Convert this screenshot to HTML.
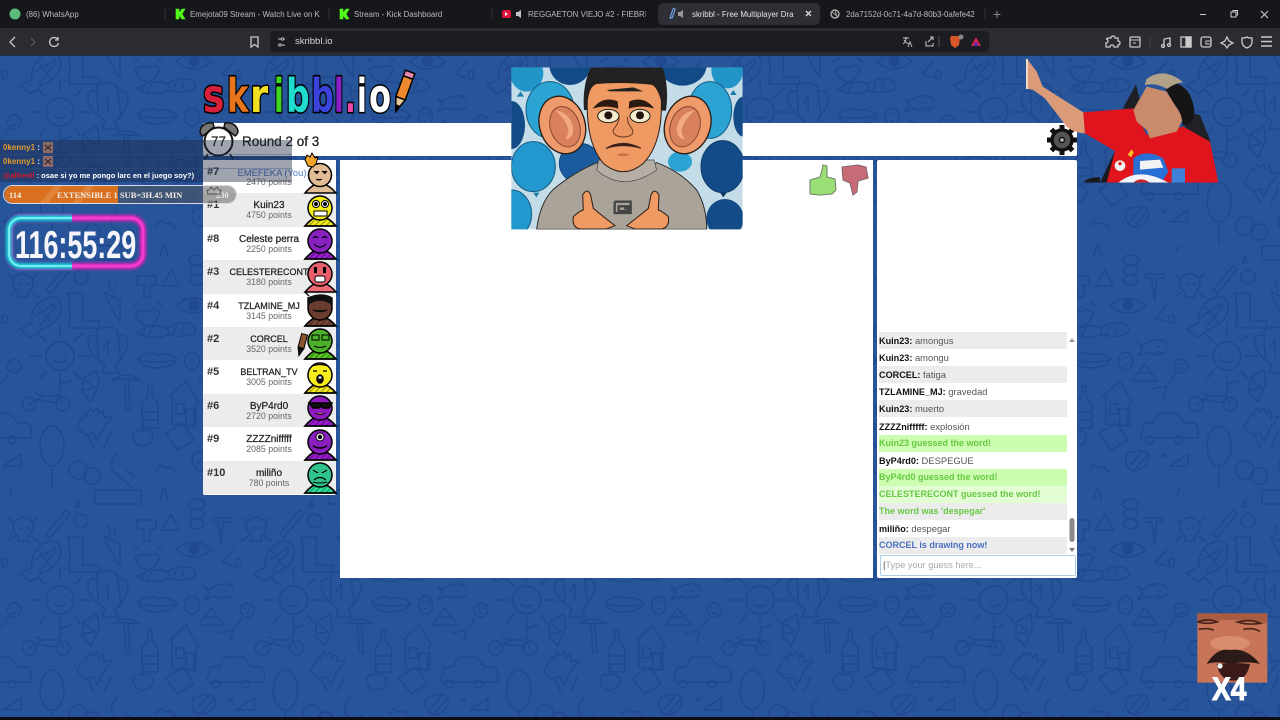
<!DOCTYPE html>
<html><head><meta charset="utf-8"><style>
html,body{margin:0;padding:0;width:1280px;height:720px;overflow:hidden;background:#28549a;font-family:"Liberation Sans",sans-serif}
.a{position:absolute}
svg.full{position:absolute;left:0;top:0}
.tab{position:absolute;top:9px;font-size:8.6px;color:#bcbcbc;white-space:nowrap;line-height:10px;transform:scaleX(.92);transform-origin:left center}
.row{position:absolute;left:203px;width:133px;height:33.4px;background:#fff;overflow:hidden}
.row.g{background:#ececec}
.rk{position:absolute;left:4px;top:6px;font-size:11px;font-weight:bold;color:#333}
.nm{position:absolute;left:0;width:132px;top:7px;text-align:center;font-size:10px;color:#222;white-space:nowrap;line-height:11px;-webkit-text-stroke:.25px #222}
.nm.u{font-size:9px}
.pt{position:absolute;left:0;width:132px;top:17px;text-align:center;font-size:8.8px;color:#666;white-space:nowrap;line-height:11px}
.c{position:absolute;left:879px;width:188px;height:17.1px;line-height:17px;font-size:9.4px;color:#555;white-space:nowrap;background:#fff}
.c.g{background:#ececec}
.c b{color:#111;font-size:9.1px}
.c.gr{color:#66c943;font-weight:bold;font-size:9px}
</style></head><body>
<svg class="full" width="1280" height="720" viewBox="0 0 1280 720">
<defs>
<pattern id="p" patternUnits="userSpaceOnUse" width="233.4" height="244">
<g fill="none" stroke="#1f4a92" stroke-width="1.7" stroke-linecap="round" stroke-linejoin="round">
<path d="M14 34q9-9 18 0q3 9-4 14v5h-10v-5q-7-5-4-14zM19 40h3M26 40h3M8 30l5 5M37 30l-5 5M8 53l6-4M38 53l-6-4"/>
<path d="M46 46l20-24l4 4l-20 24zM78 12l2 6l-5 1z"/><circle cx="81" cy="33" r="7"/>
<path d="M20 85l12-6q-2-16 12-24q16-6 17 8q-1 17-20 22q-6 8-12 8zM35 72l20-12M40 82l16-20M38 62l14 18"/>
<path d="M68 49h15v28h16v7h-30q2-18-1-35z"/>
<path d="M104 48l16 8l0 22q-10-14-16-30zM110 46l-2-10M114 47l3-8"/>
<path d="M137 32h19v9h-6v12h-6v-12h-7zM162 42l9-16l9 16z"/>
<path d="M212 30h18v4h-7l-2 22l-3-22h-6z"/>
<path d="M135 70q6-6 13-2q6-5 12 1q-5 13-12 13q-8-1-13-12zM134 62l5-4M162 62l-5-4"/>
<path d="M176 62q18-16 36 0q-18 14-36 0z"/><circle cx="194" cy="61" r="5" fill="#1f4a92"/>
<ellipse cx="197" cy="16" rx="8" ry="5"/><ellipse cx="197" cy="26" rx="7" ry="5"/><ellipse cx="197" cy="36" rx="7" ry="5"/>
<path d="M238 56l-16 18l11 4M2 78v-6q3-3 5 0v6q-3 2-5 0z"/>
<circle cx="60" cy="112" r="14"/><path d="M53 109h1M65 109h1M54 116q6 5 12 0M60 92v-12M74 97l8-7M46 97l-8-7M78 112h12M42 112h-12M74 127l6 8M46 127l-6 8M60 130v10"/>
<path d="M97 86q10-6 20 0l4 30l-6 6l4 7h-17l3-8l-7-6zM97 92q-10-4-9 8q3 12 11 16M119 92q8-4 9 8q-3 12-9 16M108 96l-5 8M108 96v16"/>
<path d="M137 89q14-10 28-6q6 4 2 8q-14 6-30-2zM167 84q12-8 24 -4q6 4 4 9q-14 6-28 1M145 86l-3 5M152 84l-4 7M176 82l-3 8M184 82l-3 8"/>
<path d="M138 114q12-8 20-3q8-4 19 4q-2 8-20 9q-16 0-19-10zM139 116q18 4 38 0"/>
<ellipse cx="192" cy="117" rx="7" ry="9"/><path d="M189 114h1M194 114h1M191 121h2"/>
<path d="M204 98l5 7l-5 7l10-4q12 6 20-2q0-12-12-10q-8 1-13 6zM225 103h1M222 108h5"/>
<path d="M211 120l-12 17h25zM205 129h13"/>
<circle cx="14" cy="122" r="7"/><circle cx="247" cy="122" r="7"/><path d="M11 120h1M16 120h1M12 125q2 1 4 0M8 130l-4 7l-6 3M241 130l-8 12l-14 3M233 142l-3 12M233 142l3 10"/>
<path d="M83 134l14-8l2 14l-8 18l-9-10zM85 136l10 8M83 146l10-2"/>
<path d="M112 136q14-10 28 0q-14-2-28 0zM124 135l2 30h4l-2-30"/>
<path d="M148 142h4v10l6 8v24h-16v-24l6-8zM142 168h16M142 176h16"/>
<path d="M169 153l17-16l13 22M172 150v30l24 2v-24M176 160h8v10h-8zM186 165h8v17h-8z"/>
<circle cx="29" cy="160" r="7"/><circle cx="63" cy="160" r="7"/><path d="M29 160l14-8h16l4 8M43 152l-8-3M59 152l2-12l10-3M38 156l20 3"/>
<path d="M77 183l8 8l8-2l4 8l7-14l8-10l-4-1l-4 2l-1-8l-4 4l-2-6l-4 4l-3-4l-3 8l-2-3z"/><path d="M88 192l6 12M104 204l7-16"/>
<path d="M207 192l4-13h8l6-10h18l8 10h10l3 5v10h-55z"/><circle cx="216" cy="196" r="4"/><circle cx="245" cy="196" r="4"/>
<path d="M-26 192l4-13h8l6-10h18l8 10h10l3 5v10h-55z"/><circle cx="-17" cy="196" r="4"/><circle cx="12" cy="196" r="4"/>
<ellipse cx="52" cy="202" rx="12" ry="20"/><path d="M52 222v22"/>
<circle cx="78" cy="226" r="9"/><circle cx="92" cy="232" r="8"/>
<path d="M117 210q-8 8-5 16q6 6 12 10q4 4 8 8M126 226l8 6"/>
<path d="M133 192q2-8 10-5q8-3 10 5q0 9-10 10q-9 0-10-10zM143 186q-1-6 2-8"/>
<path d="M165 190l18-11l11 17l-16 10z"/>
<path d="M192 216q0-9 8-8q4-3 10-1q8 3 4 12q-6 7-14 8q-8-3-8-11zM196 222l12-14M201 226l12-14"/>
<path d="M228 212l26-13v13zM3 222l18-12v12z"/>
<path d="M95 2h46v14h-46zM100 2l4-8l4 8l5-8l5 8l5-8l5 8"/>
<path d="M160 12l4-14l4 14M165 0l-5-8M12 0l-2 8M156 226l4-5l6 3l5-1l5 6"/>
</g></pattern>
<pattern id="h" patternUnits="userSpaceOnUse" width="4" height="4" patternTransform="rotate(-45)"><rect width="4" height="1.2" fill="#000" fill-opacity=".35"/></pattern>
<clipPath id="pc"><rect x="34" y="22" width="694" height="486"/></clipPath>
<clipPath id="sc"><rect x="670" y="0" width="700" height="383"/></clipPath>
<clipPath id="mm"><rect x="142" y="40" width="210" height="208"/></clipPath>
<clipPath id="tl"><rect x="0" y="205" width="72" height="70"/></clipPath>
<filter id="gl" x="-20%" y="-40%" width="140%" height="180%"><feGaussianBlur stdDeviation="1.6"/></filter>
<path id="hb" d="M1 30q6-7 11-9h8q6 2 12 9z" fill="url(#h)"/>
</defs>
<rect width="1280" height="720" fill="#28549a"/>
<rect width="1280" height="720" fill="url(#p)"/>
<rect width="1280" height="28" fill="#16171b"/>
<rect y="28" width="1280" height="27" fill="#2b2c31"/>
<rect y="55" width="1280" height="1" fill="#1b2d4f"/>
<rect x="270" y="31" width="719" height="21" rx="4" fill="#1c1d21"/>
<rect x="658" y="3" width="162" height="22" rx="5" fill="#2d2f35"/>
<rect x="0" y="717" width="1280" height="3" fill="#0b0d12"/>
<circle cx="15" cy="14" r="5.5" fill="#5dbb79"/>
<path d="M165 9v10M329 9v10M492 9v10M985 9v10" stroke="#33343a" stroke-width="1"/>
<path d="M176 9h3v4l3-4h3l-3 5l3 5h-3l-3-4v4h-3z" fill="#53fc18" stroke="#53fc18" stroke-width=".6"/>
<path d="M340 9h3v4l3-4h3l-3 5l3 5h-3l-3-4v4h-3z" fill="#53fc18" stroke="#53fc18" stroke-width=".6"/>
<rect x="502" y="10" width="9" height="8" rx="2" fill="#e0123a"/><path d="M505 12l3 2l-3 2z" fill="#fff"/>
<path d="M516 12h2l3-2v8l-3-2h-2z" fill="#c4c4c4"/>
<path d="M670 18l3-9q2-2 2 1l-3 8z" fill="none" stroke="#6e9fe0" stroke-width="1.2"/>
<path d="M678 12h2l3-2v8l-3-2h-2z" fill="#999"/>
<path d="M806 11l5 5M811 11l-5 5" stroke="#ddd" stroke-width="1.3"/>
<circle cx="835" cy="14" r="4" fill="none" stroke="#aaa" stroke-width="1.5"/><path d="M832 12l5 4M835 10l2 7" stroke="#aaa"/>
<path d="M997 11v7M993.5 14.5h7" stroke="#888"/>
<path d="M1200 14.5h6" stroke="#ccc"/>
<rect x="1231" y="12" width="5" height="5" fill="none" stroke="#ccc"/><path d="M1233 12v-1.500h4.500v4.500h-1.500" fill="none" stroke="#ccc"/>
<path d="M1261 11l7 7M1268 11l-7 7" stroke="#ccc" stroke-width="1.1"/>
<g fill="none" stroke="#c9c9c9" stroke-width="1.3">
<path d="M15 37l-5 5l5 5"/><path d="M31 38l4 4l-4 4" stroke="#555"/>
<path d="M57.5 39a4.5 4.5 0 1 0 1 4M58 37v3h-3"/>
<path d="M251 37h7v10l-3.500-2.500l-3.500 2.500z"/>
<path d="M278 39h3M284 39h1M278 45h1M281 45h4" stroke-width="1"/><circle cx="282.5" cy="39" r="1.2" stroke-width=".8"/><circle cx="280" cy="45" r="1.2" stroke-width=".8"/>
<path d="M903 38h6M906 37v1q0 4-3 6M904 40q2 3 5 4M908 47l2-5l2 5" stroke-width=".9"/>
<path d="M926 41v5h7v-3M928 42l5-5M930 37h3v3" stroke-width="1"/>
<path d="M1108 38h3q0-2 2-2t2 2h3v3q2 0 2 2t-2 2v2h-4q0-2-2-2t-2 2h-4v-4q2 0 2-2t-2-2z"/>
<rect x="1130" y="37" width="10" height="10" rx="1"/><path d="M1130 40h10M1133 43h3" stroke-width="1"/>
<path d="M1164 39l6-1v7M1164 39v8"/><circle cx="1163" cy="46" r="1.5"/><circle cx="1169" cy="45" r="1.5"/>
<rect x="1181" y="37" width="10" height="10"/><rect x="1186" y="37" width="5" height="10" fill="#c9c9c9"/>
<rect x="1201" y="37" width="10" height="10" rx="2"/><path d="M1206 41h5v3h-5z" stroke-width="1"/>
<path d="M1227 37l2 4l4 2l-4 2l-2 3l-2-3l-4-2l4-2z"/>
<path d="M1242 38q4 0 5-1q1 1 5 1v4q0 4-5 6q-5-2-5-6z"/>
<path d="M1261 37h11M1261 41.500h11M1261 46h11" stroke-width="1.4"/>
</g>
<path d="M1150 37v10" stroke="#444"/>
<path d="M939 36v11" stroke="#555"/>
<path d="M951 36h8l1 2l-1 7l-4 3l-4-3l-1-7z" fill="#d9562a"/>
<circle cx="961" cy="37" r="2.5" fill="#888"/>
<path d="M976 37l5 9h-10z" fill="#d8214a"/><path d="M976 41l2.500 5h-5z" fill="#5530a8"/>
<rect x="203" y="123" width="874" height="33" rx="2" fill="#fff"/>
<rect x="203" y="160" width="133" height="335" rx="2" fill="#fff"/>
<rect x="340" y="160" width="533" height="418" fill="#fff"/>
<rect x="877" y="160" width="200" height="418" rx="2" fill="#fff"/>
</svg>

<div class="tab" style="left:26px">(86) WhatsApp</div>
<div class="tab" style="left:190px;width:141px;overflow:hidden">Emejota09 Stream - Watch Live on Ki</div>
<div class="tab" style="left:354px">Stream - Kick Dashboard</div>
<div class="tab" style="left:528px;width:128px;overflow:hidden">REGGAETON VIEJO #2 - FIEBRE F</div>
<div class="tab" style="left:692px;color:#e4e4e4;width:114px;overflow:hidden">skribbl - Free Multiplayer Dra</div>
<div class="tab" style="left:846px;width:141px;overflow:hidden">2da7152d-0c71-4a7d-80b3-0afefe42</div>
<div class="a" style="left:295px;top:36px;font-size:9.5px;color:#d6d6d6">skribbl.io</div>

<div class="a" style="left:242px;top:134px;font-size:13.5px;color:#222;white-space:nowrap;-webkit-text-stroke:.25px #222">Round 2 of 3</div>

<div class="row" style="top:160px"><div class="rk">#7</div><div class="nm u" style="color:#4a76c9;-webkit-text-stroke:0;font-size:9.4px;left:3px">EMEFEKA (You)</div><div class="pt">2470 points</div></div>
<div class="row g" style="top:193.4px"><div class="rk">#1</div><div class="nm">Kuin23</div><div class="pt">4750 points</div></div>
<div class="row" style="top:226.8px"><div class="rk">#8</div><div class="nm">Celeste perra</div><div class="pt">2250 points</div></div>
<div class="row g" style="top:260.2px"><div class="rk">#3</div><div class="nm u">CELESTERECONT</div><div class="pt">3180 points</div></div>
<div class="row" style="top:293.6px"><div class="rk">#4</div><div class="nm u">TZLAMINE_MJ</div><div class="pt">3145 points</div></div>
<div class="row g" style="top:327px"><div class="rk">#2</div><div class="nm u">CORCEL</div><div class="pt">3520 points</div></div>
<div class="row" style="top:360.4px"><div class="rk">#5</div><div class="nm u">BELTRAN_TV</div><div class="pt">3005 points</div></div>
<div class="row g" style="top:393.8px"><div class="rk">#6</div><div class="nm">ByP4rd0</div><div class="pt">2720 points</div></div>
<div class="row" style="top:427.2px"><div class="rk">#9</div><div class="nm">ZZZZnifffff</div><div class="pt">2085 points</div></div>
<div class="row g" style="top:460.6px;height:33.4px"><div class="rk">#10</div><div class="nm">miliño</div><div class="pt">780 points</div></div>

<div class="c g" style="top:332px"><b>Kuin23:</b> amongus</div>
<div class="c" style="top:349.1px"><b>Kuin23:</b> amongu</div>
<div class="c g" style="top:366.2px"><b>CORCEL:</b> fatiga</div>
<div class="c" style="top:383.3px"><b>TZLAMINE_MJ:</b> gravedad</div>
<div class="c g" style="top:400.4px"><b>Kuin23:</b> muerto</div>
<div class="c" style="top:417.5px"><b>ZZZZnifffff:</b> explosión</div>
<div class="c gr" style="top:434.6px;background:#cdfdb0">Kuin23 guessed the word!</div>
<div class="c" style="top:451.7px"><b>ByP4rd0:</b> DESPEGUE</div>
<div class="c gr" style="top:468.8px;background:#cdfdb0">ByP4rd0 guessed the word!</div>
<div class="c gr" style="top:485.9px;background:#e3fdd3">CELESTERECONT guessed the word!</div>
<div class="c gr" style="top:503px;background:#ececec">The word was 'despegar'</div>
<div class="c" style="top:520.1px"><b>miliño:</b> despegar</div>
<div class="c g" style="top:537.2px;color:#4a6fc0;font-weight:bold;font-size:9px">CORCEL is drawing now!</div>
<div class="a" style="left:880px;top:555px;width:192px;height:19px;border:1px solid #a9cfe6;border-radius:2px;background:#fff;font-size:9.2px;color:#aaa;line-height:19px;padding-left:2px"><span style="color:#444">|</span>Type your guess here...</div>

<svg class="full" width="1280" height="720" viewBox="0 0 1280 720" font-family="Liberation Sans, sans-serif">
<path d="M1072 338l3 4h-6z" fill="#999"/><path d="M1072 552l3-4h-6z" fill="#777"/>
<rect x="1069.5" y="518" width="5" height="24" rx="2.5" fill="#8a8a8a"/>

<!-- logo -->
<g font-family="DejaVu Sans, sans-serif" font-weight="bold" font-size="46" stroke="#000" stroke-width="3.2" paint-order="stroke" stroke-linejoin="round">
<text fill="#d8203a" transform="translate(203 112) scale(.78 1)">s</text>
<text fill="#e8751c" transform="translate(227 112) scale(.7 1)">k</text>
<text fill="#f2e020" transform="translate(250 112) scale(.8 1)">r</text>
<text fill="#3ed81e" transform="translate(274 112) scale(.62 1)">i</text>
<text fill="#20dcd0" transform="translate(286 112) scale(.72 1)">b</text>
<text fill="#3a44dd" transform="translate(311 112) scale(.7 1)">b</text>
<text fill="#8a20c8" transform="translate(334 112) scale(.62 1)">l</text>
<text fill="#ee48a8" transform="translate(345 112) scale(.62 1)">.</text>
<text fill="#fff" transform="translate(357 112) scale(.62 1)">i</text>
<text fill="#fff" transform="translate(369 112) scale(.7 1)">o</text>
</g>
<g transform="translate(405 86) rotate(20)" stroke="#000" stroke-width="1.5"><rect x="-5" y="-15" width="10" height="6" fill="#e88ab0"/><rect x="-5" y="-9" width="10" height="22" fill="#ee8a2e"/><path d="M-5 13l5 14l5-14z" fill="#e8c79a"/><path d="M-2 21l2 6l2-6z" fill="#000"/></g>

<!-- clock -->
<g stroke="#111" stroke-width="1.5"><path d="M200 131q2-9 13-8l1 4l-11 9q-3-2-3-5zM238 131q-2-9-13-8l-1 4l11 9q3-2 3-5z" fill="#777"/><path d="M208 154l-3 5M230 154l3 5"/><circle cx="218.5" cy="141.5" r="14" fill="#fff" stroke-width="2"/></g>
<text x="218.5" y="146" font-size="13.5" text-anchor="middle" fill="#222" stroke="#222" stroke-width=".2">77</text>

<!-- thumbs -->
<path d="M810 180l10-3l2-7l1-5l4 1l0 11l8 2l1 11l-4 4l-12 1l-10-1z" fill="#9ade76" stroke="#6f7f66" stroke-width="1"/>
<path d="M842 167l16-2l8 2l2 11l-10 3l-1 11l-4 3l-3-12l-7-3z" fill="#c96b76" stroke="#7d6469" stroke-width="1"/>

<!-- gear -->
<g transform="translate(1062 140)"><circle r="10" fill="#555" stroke="#111" stroke-width="3.5"/><g fill="#111"><rect x="-2.5" y="-15" width="5" height="6"/><rect x="-2.5" y="9" width="5" height="6"/><rect x="-15" y="-2.5" width="6" height="5"/><rect x="9" y="-2.5" width="6" height="5"/><rect x="-2.5" y="-15" width="5" height="6" transform="rotate(45)"/><rect x="-2.5" y="-15" width="5" height="6" transform="rotate(135)"/><rect x="-2.5" y="-15" width="5" height="6" transform="rotate(225)"/><rect x="-2.5" y="-15" width="5" height="6" transform="rotate(315)"/></g><circle r="2.5" fill="#bbb" stroke="#111" stroke-width="1.5"/></g>

<!-- avatars -->
<g stroke="#000" stroke-width="1.5">
<g transform="translate(304 163)"><path d="M1 30q6-7 11-9h8q6 2 12 9z" fill="#e2bc94"/><circle cx="16" cy="12" r="11.5" fill="#e2bc94"/><path d="M10 8l3 2.500l2-2.500M18 8l3 2.500l2-2.500M12 16q3 2 6 0" fill="#000" stroke-width="1"/></g>
<path d="M305 160l2-5l3 2l2-4l3 5l3-1l-2 7l-3 3l-5-1z" fill="#f2a42a" stroke-width="1"/>
<g transform="translate(304 196)"><path d="M1 30q6-7 11-9h8q6 2 12 9z" fill="#f4ec1a"/><use href="#hb"/><circle cx="16" cy="12" r="12" fill="#f4ec1a"/><circle cx="12" cy="8" r="3.5" fill="#fff" stroke-width="1"/><circle cx="21" cy="8" r="3.500" fill="#fff" stroke-width="1"/><circle cx="12" cy="8" r="1.2"/><circle cx="21" cy="8" r="1.2"/><rect x="10" y="15" width="13" height="5" fill="#fff" stroke-width="1"/></g>
<g transform="translate(304 229)"><path d="M1 30q6-7 11-9h8q6 2 12 9z" fill="#9a1fd0"/><use href="#hb"/><circle cx="16" cy="12" r="12" fill="#8a22c0"/><path d="M9 9q3-3 5 0M18 9q3-3 5 0M10 15q6 6 12 0" fill="none" stroke-width="1.2"/></g>
<g transform="translate(304 262)"><path d="M1 30q6-7 11-9h8q6 2 12 9z" fill="#ee6a78"/><circle cx="16" cy="12" r="12" fill="#e8606c"/><rect x="10" y="5" width="3" height="6" fill="#000" stroke="none"/><rect x="19" y="5" width="3" height="6" fill="#000" stroke="none"/><rect x="11" y="14" width="10" height="6" rx="2" fill="#fff" stroke-width="1"/></g>
<g transform="translate(304 296)"><path d="M1 30q6-7 11-9h8q6 2 12 9z" fill="#7a4436"/><use href="#hb"/><circle cx="16" cy="12" r="12" fill="#6c3b30"/><path d="M4 8q12-8 24 0v-6q-10-6-24 0zM5 0l-4-4M9 14q7 3 14 0" fill="#111" stroke="#111"/></g>
<g transform="translate(304 329)"><path d="M1 30q6-7 11-9h8q6 2 12 9z" fill="#55c71e"/><use href="#hb"/><circle cx="16" cy="12" r="12" fill="#4cb02a"/><rect x="8" y="6" width="7" height="5" fill="none" stroke-width="1"/><rect x="18" y="6" width="7" height="5" fill="none" stroke-width="1"/><path d="M10 17q6 3 12 0" fill="none" stroke-width="1"/></g>
<g transform="translate(302 344) rotate(15)" stroke-width="1"><rect x="-3" y="-10" width="6" height="14" fill="#8a5530"/><path d="M-3 4l3 8l3-8z" fill="#111"/></g>
<g transform="translate(304 363)"><path d="M1 30q6-7 11-9h8q6 2 12 9z" fill="#f7ec1c"/><use href="#hb"/><circle cx="16" cy="12" r="12" fill="#f7ec1c"/><path d="M8 3q8-3 16 0M9 8h4M19 8h4" fill="none" stroke-width="1.2"/><ellipse cx="16" cy="16" rx="3" ry="4" fill="#111"/><rect x="14.5" y="13.5" width="3" height="2" fill="#fff" stroke="none"/></g>
<g transform="translate(304 396)"><path d="M1 30q6-7 11-9h8q6 2 12 9z" fill="#a019d8"/><use href="#hb"/><circle cx="16" cy="12" r="12" fill="#8f1bc0"/><path d="M5 7h23l-3 5h-6l-2-2l-2 2h-6z" fill="#111"/><path d="M11 17q5 3 10 0" fill="#d66" stroke-width="1"/></g>
<g transform="translate(304 430)"><path d="M1 30q6-7 11-9h8q6 2 12 9z" fill="#9a1cd0"/><use href="#hb"/><circle cx="16" cy="12" r="12" fill="#8a1fc0"/><circle cx="16" cy="7" r="4" fill="#fff" stroke-width="1"/><circle cx="16" cy="7" r="1.5"/><path d="M9 16q7 4 14 0" fill="none"/></g>
<g transform="translate(304 463)"><path d="M1 30q6-7 11-9h8q6 2 12 9z" fill="#2fe09a"/><use href="#hb"/><circle cx="16" cy="12" r="12" fill="#30c48c"/><path d="M9 7l5 3M23 7l-5 3M10 17q6-5 12 0M9 19q7 2 14 0" fill="none" stroke-width="1.1"/></g>
</g>

<!-- portrait -->
<g transform="translate(500 60) scale(.33333)" clip-path="url(#pc)">
<rect x="34" y="22" width="694" height="486" fill="#c3dce8"/>
<ellipse cx="80" cy="40" rx="50" ry="55" fill="#2195c8"/><path d="M50 110h22l-10-16z" fill="#1c7aa8"/>
<ellipse cx="210" cy="15" rx="62" ry="60" fill="#124b87"/>
<ellipse cx="150" cy="150" rx="72" ry="85" fill="#2ba3d3" stroke="#165b82" stroke-width="3"/>
<ellipse cx="35" cy="195" rx="40" ry="72" fill="#124b87"/>
<ellipse cx="100" cy="320" rx="66" ry="75" fill="#2298cf" stroke="#165b82" stroke-width="3"/>
<ellipse cx="35" cy="462" rx="60" ry="72" fill="#2298cf" stroke="#165b82" stroke-width="3"/>
<ellipse cx="240" cy="310" rx="62" ry="60" fill="#1a5a9f" stroke="#124b87" stroke-width="3"/>
<ellipse cx="548" cy="15" rx="72" ry="62" fill="#124b87"/>
<ellipse cx="682" cy="30" rx="48" ry="55" fill="#2195c8"/><path d="M690 105h20l-10-15z" fill="#1c7aa8"/>
<ellipse cx="630" cy="150" rx="65" ry="85" fill="#2ba3d3" stroke="#165b82" stroke-width="3"/>
<ellipse cx="730" cy="170" rx="30" ry="60" fill="#124b87"/>
<ellipse cx="668" cy="320" rx="65" ry="78" fill="#124b87" stroke="#0e3a6b" stroke-width="3"/>
<ellipse cx="540" cy="305" rx="36" ry="30" fill="#2ba3d3"/>
<ellipse cx="675" cy="475" rx="56" ry="58" fill="#124b87"/>
<path d="M100 398h18l-9 14z" fill="#1c7aa8"/><path d="M660 398h20l-10 14z" fill="#0e3a6b"/>
<ellipse cx="187" cy="195" rx="68" ry="88" fill="#ee9a6a" stroke="#2a1c16" stroke-width="4" transform="rotate(-18 187 195)"/>
<ellipse cx="195" cy="200" rx="44" ry="62" fill="#d9805c" stroke="#8a4a30" stroke-width="3" transform="rotate(-18 195 200)"/>
<path d="M165 150q50 10 55 60q-4 30-25 26q30-30-30-86z" fill="#f3aa7c"/>
<ellipse cx="563" cy="195" rx="68" ry="88" fill="#ee9a6a" stroke="#2a1c16" stroke-width="4" transform="rotate(18 563 195)"/>
<ellipse cx="555" cy="200" rx="44" ry="62" fill="#d9805c" stroke="#8a4a30" stroke-width="3" transform="rotate(18 555 200)"/>
<path d="M585 150q-50 10-55 60q4 30 25 26q-30-30 30-86z" fill="#f3aa7c"/>
<path d="M110 508q10-80 50-120q60-50 130-80q80 50 180 0q70 25 120 82q30 50 30 118z" fill="#a9a399" stroke="#2a2a2a" stroke-width="3"/>
<path d="M290 330q80 70 180 0l-8-30h-166z" fill="#b5aea4" stroke="#444" stroke-width="2"/>
<path d="M252 150q-6-70 20-128h216q20 60 10 130z" fill="#222"/>
<path d="M262 120q-4 130 48 190q60 50 120 0q58-60 54-190q-14-50-36-48q-80-8-156-2q-24 4-30 50z" fill="#ee9a62" stroke="#2a1c16" stroke-width="3"/>
<path d="M320 90l80-8l30 12l-100 0z" fill="#222"/>
<path d="M278 146q30-40 75-22l2 22q-40-12-77 0zM463 146q-30-40-75-22l-2 22q40-12 77 0z" fill="#2b1a12"/>
<ellipse cx="325" cy="168" rx="32" ry="20" fill="#f6eccd" stroke="#222" stroke-width="3"/><circle cx="325" cy="166" r="12" fill="#1d1410"/>
<ellipse cx="420" cy="168" rx="30" ry="20" fill="#f6eccd" stroke="#222" stroke-width="3"/><circle cx="420" cy="166" r="12" fill="#1d1410"/>
<path d="M358 170q-2 20-16 36q-8 14 10 22q18 6 36 0q18-8 6-24q-12-14-12-34" fill="#eb9660" stroke="#6a3a22" stroke-width="3"/>
<path d="M318 265q50-30 105 0q-50-16-105 0z" fill="#3a201a" stroke="#3a201a" stroke-width="3"/>
<ellipse cx="370" cy="284" rx="18" ry="4" fill="#c97048"/>
<path d="M344 425h48v14h-36v14h30v-8h-14M344 425v34h48v-20" fill="none" stroke="#444" stroke-width="7"/>
<path d="M220 470q20-18 30-20l-2-45q14-23 24 0l8 40q30 25 65 52l-25 10h-80q-25-5-20-37z" fill="#ee9a62" stroke="#2a1c16" stroke-width="3"/>
<path d="M505 470q-20-18-30-20l2-45q-14-23-24 0l-8 40q-30 25-65 52l25 10h80q25-5 20-37z" fill="#ee9a62" stroke="#2a1c16" stroke-width="3"/>
</g>

<!-- streamer -->
<g transform="translate(800 55) scale(.33333)" clip-path="url(#sc)">
<path d="M968 160l40-72l20 80zM1150 170l50 10l32 80l-70-10z" fill="#1f2126"/>
<path d="M900 383l45-95l40 95zM850 383q15-18 50-16v16z" fill="#191a1e"/>
<path d="M680 10l30 40l18 45l122 77l5 63q-30 0-55-20l-65-85l-35-25l-20-5z" fill="#dc9b78"/>
<rect x="678" y="12" width="6" height="90" fill="#f3d9c8"/>
<path d="M850 172l150-12l40 80l110-25l80 45l25 123h-335l25-95l-90-53z" fill="#e0141c"/>
<path d="M1040 95l-40 70l10 35l30 25l10 25l80-20l20-40l-50-80z" fill="#c98b6c"/>
<path d="M1090 90q50-20 80 30q20 50 10 70q-15 30-32 20q-4-40-20-55q-20-30-38-65z" fill="#151515"/>
<path d="M1040 72q50-38 110 10q-20 0-50 20q-30-20-66-12z" fill="#b3a28a"/>
<circle cx="960" cy="332" r="16" fill="#f3f3f3"/><circle cx="960" cy="326" r="5" fill="#e0141c"/>
<path d="M995 283l6 10l-8 14l-10-8z" fill="#f6c12a"/>
<path d="M1000 310q40-30 90 0l15 40l-20 33h-85z" fill="#2a6fd6"/>
<path d="M1020 318l60-4l10 24l-70 6z" fill="#f3f3f3"/>
<path d="M955 383q60-50 150 0z" fill="#f1f4fa"/><path d="M1000 383q20-20 50 0z" fill="#c8252a"/>
<rect x="1115" y="340" width="40" height="43" fill="#3f80d8"/>
</g>

<!-- left overlay -->
<rect x="0" y="140" width="292" height="42" fill="#1c2740" opacity=".42"/>
<rect x="0" y="154" width="292" height="1" fill="#38527f" opacity=".4"/>
<rect x="0" y="168" width="292" height="1" fill="#38527f" opacity=".4"/>
<g font-size="7.5" font-weight="bold">
<text x="3" y="150" fill="#e29a2b" font-size="8">0kenny1<tspan fill="#fff"> :</tspan></text>
<text x="3" y="164" fill="#e29a2b" font-size="8">0kenny1<tspan fill="#fff"> :</tspan></text>
<text x="3" y="178" fill="#d8162c">@alfreell<tspan fill="#fff"> : osae si yo me pongo larc en el juego soy?)</tspan></text>
</g>
<rect x="43" y="142" width="10" height="11" fill="#8a6a68"/><rect x="43" y="156" width="10" height="11" fill="#8a6a68"/>
<path d="M45 145l6 5M51 145l-6 5M45 159l6 5M51 159l-6 5" stroke="#2c1c1c"/>
<rect x="3.5" y="185.5" width="233" height="18" rx="9" fill="#555" fill-opacity=".5" stroke="#d8dce6" stroke-width="1"/>
<path d="M13 186h105v17h-105a8.500 8.500 0 0 1 0-17z" fill="#d8701f"/>
<path d="M40 203l14-17h8l-14 17zM72 203l14-17h8l-14 17z" fill="#e58a44" opacity=".7"/>
<g font-family="Liberation Serif, serif" fill="#f3ede4" font-size="8.5" font-weight="bold"><text x="9" y="198">114</text><text x="57" y="198">EXTENSIBLE 1 SUB=3H.45 MIN</text><text x="216" y="198" style="fill:#e8e8e8">230</text></g>
<path d="M207 190l2 0l2-3l3 3l3-3l2 3l2 0l-1 4h-12z M207 194h14" fill="none" stroke="#555" stroke-width="1"/>

<!-- timer -->
<rect x="9" y="218" width="134" height="48" rx="12" fill="none" stroke="#ee1fc0" stroke-width="6" filter="url(#gl)"/>
<rect x="9" y="218" width="134" height="48" rx="12" fill="none" stroke="#f23dcc" stroke-width="3"/>
<g clip-path="url(#tl)"><rect x="7" y="219" width="140" height="46" rx="12" fill="none" stroke="#28549a" stroke-width="7"/><rect x="9" y="218" width="134" height="48" rx="12" fill="none" stroke="#24e6ea" stroke-width="5" filter="url(#gl)"/><rect x="9" y="218" width="134" height="48" rx="12" fill="none" stroke="#8ff5f5" stroke-width="1.5"/></g>
<text font-size="39" font-weight="bold" fill="#f6f6fa" transform="translate(15 258) scale(.69 1)">116:55:29</text>

<!-- meme -->
<g transform="translate(1150 600) scale(.33333)">
<rect x="142" y="40" width="210" height="208" fill="#c77458"/>
<g clip-path="url(#mm)">
<path d="M142 40h210v30q-100-20-210 0z" fill="#a85c42"/>
<path d="M142 66q30-12 60 0q-30 8-60 0zM262 66q40-10 70 4q-40 6-70-4zM146 88q30-6 45 3M280 88q30-6 50 6" stroke="#4a241a" stroke-width="5" fill="none"/>
<ellipse cx="240" cy="130" rx="60" ry="22" fill="#d98c6e"/>
<path d="M170 192q30-50 70-42q50-8 90 42q-40-10-90 0q-40-10-70 0z" fill="#2b1a16"/>
<path d="M200 192q50-6 100 0q-10 50-50 50q-40 0-50-50z" fill="#3a1a18"/>
<circle cx="210" cy="198" r="8" fill="#eee"/>
</g></g>
<text font-size="32" font-weight="bold" fill="#fff" stroke="#fff" stroke-width="1" transform="translate(1212 700) scale(.88 1)">X4</text>
</svg>
</body></html>
